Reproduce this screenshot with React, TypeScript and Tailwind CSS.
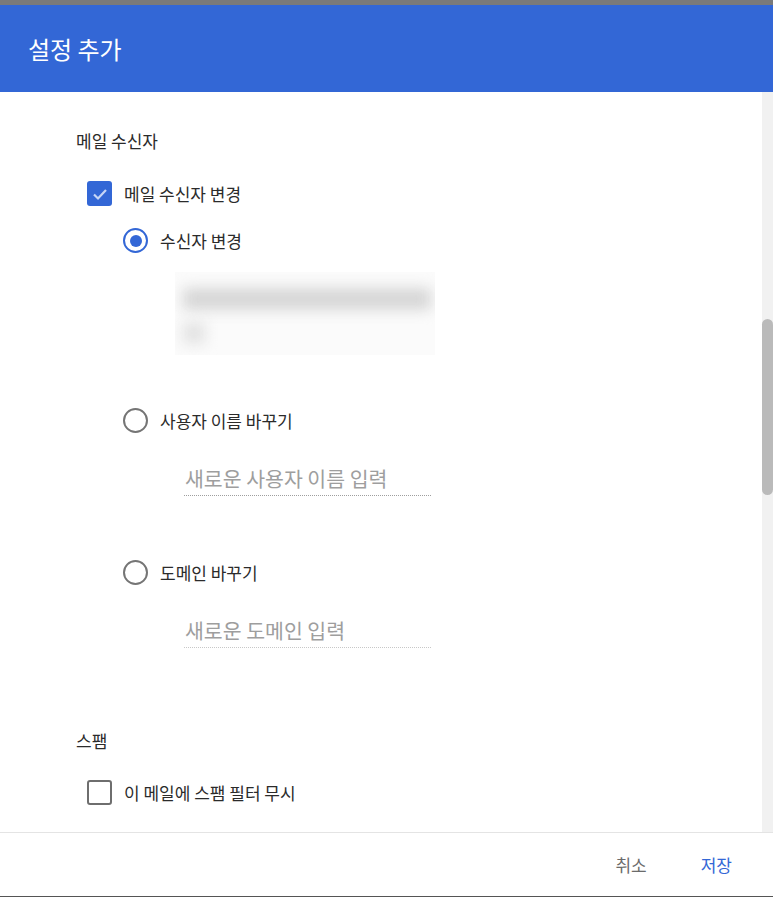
import {useState} from "react";

const font = {fontFamily: '"Noto Sans CJK KR", "Noto Sans", sans-serif'};

const Checkbox = ({checked}: {checked: boolean}) => {
  if (checked) {
    return (
      <div className="w-[25px] h-[25px] rounded-[3px] bg-[#3367d6] flex items-center justify-center">
        <svg width="18" height="18" viewBox="0 0 18 18" fill="none">
          <path d="M3 9.5 L7 13.5 L15 5" stroke="#c7d6f6" strokeWidth="2.2" />
        </svg>
      </div>
    );
  }
  return <div className="w-[25px] h-[25px] rounded-[3px] border-2 border-[#6e6e6e] bg-white" />;
};

const Radio = ({checked}: {checked: boolean}) => (
  <div
    className={`w-[25px] h-[25px] rounded-full border-[2.5px] flex items-center justify-center ${
      checked ? "border-[#3367d6]" : "border-[#757575]"
    }`}>
    {checked && <div className="w-3 h-3 rounded-full bg-[#3367d6]" />}
  </div>
);

export default function App() {
  const [username, setUsername] = useState("");
  const [domain, setDomain] = useState("");

  return (
    <div className="w-[773px] h-[897px] flex flex-col bg-white overflow-hidden" style={font}>
      <div className="h-[5px] bg-[#7a7a7a]" />
      <header className="h-[87px] bg-[#3367d6] flex items-center px-7">
        <h1 className="text-[24px] text-white font-normal">설정 추가</h1>
      </header>

      <div className="flex h-[740px]">
        <div className="flex-1 flex flex-col pl-[76px] text-[#2b2b2b]">
          <div className="h-[37px]" />
          <div className="h-[24px] flex items-center text-[17px]">메일 수신자</div>

          <div className="h-[28px]" />
          <div className="h-[25px] flex items-center pl-[11px] gap-[12px]">
            <Checkbox checked />
            <span className="text-[17px]">메일 수신자 변경</span>
          </div>

          <div className="h-[22px]" />
          <div className="h-[25px] flex items-center pl-[47px] gap-3">
            <Radio checked />
            <span className="text-[17px]">수신자 변경</span>
          </div>

          <div className="h-[19px]" />
          <div className="ml-[99px] w-[260px] h-[83px] bg-[#fbfbfb] relative overflow-hidden">
            <div className="absolute left-[8px] top-[16px] w-[248px] h-[22px] bg-[#d6d6d6] blur-[7px]" />
            <div className="absolute left-[8px] top-[50px] w-[22px] h-[22px] bg-[#e2e2e2] blur-[7px]" />
          </div>

          <div className="h-[53px]" />
          <div className="h-[25px] flex items-center pl-[47px] gap-3">
            <Radio checked={false} />
            <span className="text-[17px]">사용자 이름 바꾸기</span>
          </div>

          <div className="h-[27px]" />
          <input
            value={username}
            onChange={(e) => setUsername(e.target.value)}
            placeholder="새로운 사용자 이름 입력"
            className="ml-[108px] w-[247px] h-[36px] text-[20.5px] text-[#333] placeholder:text-[#9e9e9e] border-b border-dotted border-[#9e9e9e] outline-none px-[1px]"
          />

          <div className="h-[64px]" />
          <div className="h-[25px] flex items-center pl-[47px] gap-3">
            <Radio checked={false} />
            <span className="text-[17px]">도메인 바꾸기</span>
          </div>

          <div className="h-[27px]" />
          <input
            value={domain}
            onChange={(e) => setDomain(e.target.value)}
            placeholder="새로운 도메인 입력"
            className="ml-[108px] w-[247px] h-[36px] text-[20.5px] text-[#333] placeholder:text-[#9e9e9e] border-b border-dotted border-[#c8c8c8] outline-none px-[1px]"
          />

          <div className="h-[81px]" />
          <div className="h-[24px] flex items-center text-[17px]">스팸</div>

          <div className="h-[27px]" />
          <div className="h-[25px] flex items-center pl-[11px] gap-[12px]">
            <Checkbox checked={false} />
            <span className="text-[17px]">이 메일에 스팸 필터 무시</span>
          </div>
        </div>

        <div className="w-[11px] bg-[#f1f1f1] flex flex-col pt-[227px]">
          <div className="h-[176px] rounded-full bg-[#bababa]" />
        </div>
      </div>

      <footer className="h-[64px] border-t border-[#e4e4e4] flex items-center justify-end pr-[41px] gap-[54px] text-[17px]">
        <button type="button" className="text-[#6b6b6b] cursor-pointer">
          취소
        </button>
        <button type="button" className="text-[#3367d6] cursor-pointer">
          저장
        </button>
      </footer>
      <div className="h-[1px] bg-[#555]" />
    </div>
  );
}
